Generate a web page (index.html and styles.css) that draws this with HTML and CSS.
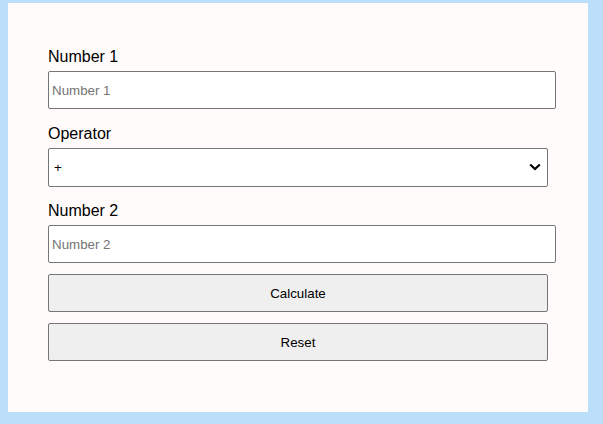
FILE: index.html
```html
<!DOCTYPE html>
<html lang="en">
<head>
<meta charset="utf-8">
<title>Calculator</title>
<link rel="stylesheet" href="styles.css">
</head>
<body>
<div class="card">
  <label class="label" for="n1">Number 1</label>
  <input class="field field-gap" id="n1" type="number" placeholder="Number 1">
  <label class="label" for="op">Operator</label>
  <div class="select-wrap">
    <select class="select" id="op">
      <option>+</option>
      <option>-</option>
      <option>*</option>
      <option>/</option>
    </select>
    <svg class="chevron" width="12" height="8" viewBox="0 0 12 8" aria-hidden="true">
      <path d="M1.2 1.5 L6 6 L10.8 1.5" fill="none" stroke="#000" stroke-width="2.2" stroke-linecap="butt" stroke-linejoin="miter"/>
    </svg>
  </div>
  <label class="label" for="n2">Number 2</label>
  <input class="field field-last" id="n2" type="number" placeholder="Number 2">
  <button class="btn btn-gap" type="button">Calculate</button>
  <button class="btn" type="button">Reset</button>
</div>
</body>
</html>
```

FILE: styles.css
```css
html, body {
  background: #bbdefb;
}
body {
  margin: 3px 8px 0;
  font-family: "Liberation Sans", Arial, sans-serif;
}
.card {
  width: 500px;
  padding: 44px 40px 51px;
  background: #fffbfb;
}
.label {
  display: block;
  font-size: 16px;
  line-height: 18px;
  color: #000;
  padding-top: 1px;
  margin: 0 0 5px;
}
.field {
  display: block;
  width: 100%;
  height: 36px;
  padding: 0 3px;
  margin: 0;
  border: 1px solid #767676;
  border-radius: 2px;
  background: #fff;
  font-family: "Liberation Sans", Arial, sans-serif;
  font-size: 13.33px;
  color: #000;
  -moz-appearance: textfield;
}
.field::-webkit-outer-spin-button,
.field::-webkit-inner-spin-button {
  -webkit-appearance: none;
  margin: 0;
}
.field::placeholder {
  color: #757575;
}
.field-gap {
  margin-bottom: 15px;
}
.field-last {
  margin-bottom: 11px;
}
.select-wrap {
  position: relative;
  margin: 0 0 14px;
}
.select {
  display: block;
  box-sizing: border-box;
  width: 100%;
  height: 39px;
  margin: 0;
  padding: 0 24px 0 5px;
  border: 1px solid #767676;
  border-radius: 2px;
  background-color: #fff;
  font-family: "Liberation Sans", Arial, sans-serif;
  font-size: 13.33px;
  color: #000;
  -webkit-appearance: none;
  appearance: none;
}
.chevron {
  position: absolute;
  right: 7px;
  top: 15px;
  pointer-events: none;
}
.btn {
  display: block;
  box-sizing: border-box;
  width: 100%;
  height: 38px;
  margin: 0;
  border: 1px solid #767676;
  border-radius: 2px;
  background: #efefef;
  font-family: "Liberation Sans", Arial, sans-serif;
  font-size: 13.33px;
  color: #000;
}
.btn-gap {
  margin-bottom: 11px;
}
```
